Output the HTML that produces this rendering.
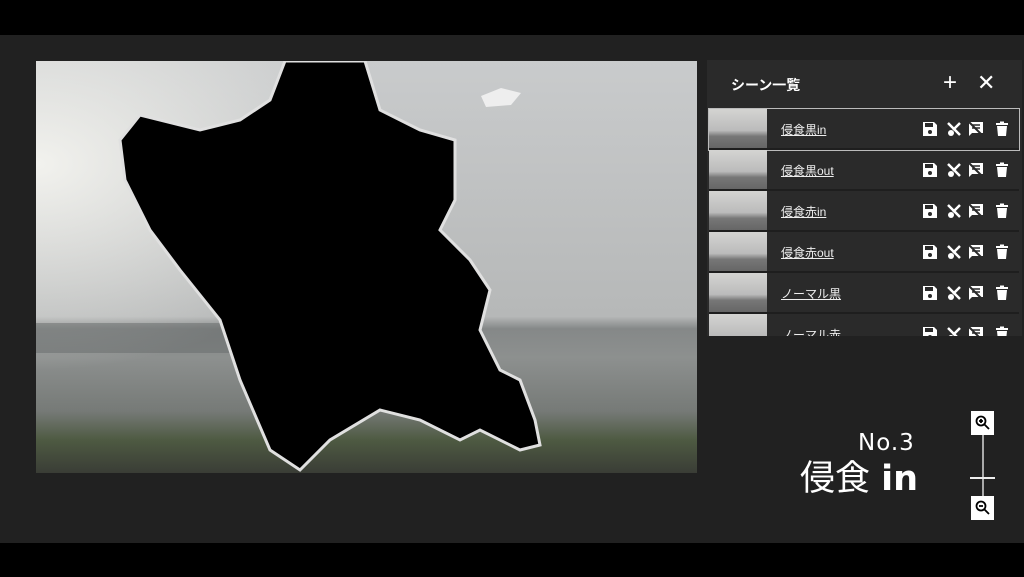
<!DOCTYPE html>
<html><head><meta charset="utf-8"><style>
body{margin:0;width:1024px;height:577px;background:#000;position:relative;overflow:hidden;font-family:"Liberation Sans","Noto Sans CJK JP",sans-serif}
#main{position:absolute;left:0;top:35px;width:1024px;height:508px;background:#212121}
#panel{position:absolute;left:707px;top:60px;width:315px;height:276px;background:#2a2a2a;overflow:hidden}
.hd{height:48px;position:relative;color:#fff;font-size:14px;font-weight:bold}
.row{position:absolute;left:2px;width:310px;height:39px;border-bottom:2px solid #1e1e1e}
.row .th{position:absolute;left:0;top:0;width:58px;height:39px;background:linear-gradient(#d4d4d2 0%,#bbb 55%,#777 70%,#666 100%)}
.row .t{position:absolute;left:72px;top:12px;color:#eee;font-size:12px;text-decoration:underline}
.ic{position:absolute;top:12px;width:16px;height:16px}
.zm{position:absolute;left:971px;width:23px;height:24px;background:#fff}
</style></head><body>
<div id="main"></div>
<svg style="position:absolute;left:36px;top:61px" width="661" height="412">
<defs><linearGradient id="sky" x1="0" y1="0" x2="0" y2="1"><stop offset="0" stop-color="#c9cbcc"/><stop offset="0.62" stop-color="#b6b8b8"/><stop offset="0.65" stop-color="#858888"/><stop offset="0.72" stop-color="#8d908f"/><stop offset="0.85" stop-color="#767a77"/><stop offset="0.92" stop-color="#4e5a42"/><stop offset="1" stop-color="#3a3d36"/></linearGradient>
<radialGradient id="sun" cx="0" cy="0.25" r="0.5"><stop offset="0" stop-color="#f2f2ee"/><stop offset="1" stop-color="#f2f2ee" stop-opacity="0"/></radialGradient></defs>
<rect width="661" height="412" fill="url(#sky)"/>
<rect width="661" height="412" fill="url(#sun)"/>
<rect y="262" width="200" height="30" fill="#666a6a" opacity="0.5"/>
<path d="M249,0 L329,0 L344,49 L384,69 L419,79 L419,139 L404,169 L434,199 L454,229 L444,269 L464,309 L484,319 L499,359 L504,384 L484,389 L444,369 L424,379 L384,359 L344,349 L294,379 L264,409 L234,389 L204,319 L184,259 L144,209 L114,169 L89,119 L84,79 L104,54 L164,69 L204,59 L234,39 Z" fill="#000" stroke="#e0e0e0" stroke-width="3"/>
<path d="M445,35 l20,-8 l20,5 l-10,12 l-25,2 z" fill="#eee"/>
</svg>
<div id="panel">
<div class="hd"><span style="position:absolute;left:24px;top:15px">シーン一覧</span>
<span style="position:absolute;left:236px;top:9px;font-size:24px;font-weight:normal">+</span>
<span style="position:absolute;left:270px;top:10px;font-size:22px;font-weight:normal">✕</span></div>
</div>
<script>
var names=["侵食黒in","侵食黒out","侵食赤in","侵食赤out","ノーマル黒","ノーマル赤"];
var p=document.getElementById('panel');
names.forEach(function(n,i){
var r=document.createElement('div');r.className='row';r.style.top=(49+i*41)+'px';
if(i==0){r.style.outline='1px solid #bbb';}
var ic='<svg class="ic" style="left:213px" viewBox="0 0 16 16"><path d="M1 1h11l3 3v11H1z" fill="#fff"/><rect x="3" y="2" width="8" height="4" fill="#2a2a2a"/><circle cx="8" cy="11" r="2" fill="#2a2a2a"/></svg>'+
'<svg class="ic" style="left:237px" viewBox="0 0 16 16"><path d="M2 2L14 14M14 2L7 9" stroke="#fff" stroke-width="2.5"/><circle cx="5" cy="12" r="3" fill="#fff"/></svg>'+
'<svg class="ic" style="left:259px" viewBox="0 0 16 16"><path d="M1 1h14v11H4l-3 3z" fill="#fff"/><path d="M4 4h8M4 7h8" stroke="#2a2a2a" stroke-width="1.5"/><path d="M1 1L15 15" stroke="#2a2a2a" stroke-width="2"/></svg>'+
'<svg class="ic" style="left:285px" viewBox="0 0 16 16"><rect x="2" y="2" width="12" height="2" fill="#fff"/><rect x="6" y="0.5" width="4" height="2" fill="#fff"/><path d="M3 5h10l-1 10H4z" fill="#fff"/></svg>';
r.innerHTML='<div class="th"></div><div class="t">'+n+'</div>'+ic;
p.appendChild(r);});
</script>
<div style="position:absolute;left:858px;top:430px;color:#fff;font-size:23px;font-family:'DejaVu Sans',sans-serif;letter-spacing:1px">No.3</div>
<div style="position:absolute;left:800px;top:456px;color:#fff;font-size:35px;font-family:'DejaVu Sans','Noto Sans CJK JP',sans-serif;line-height:46px">侵食 <b>in</b></div>
<div style="position:absolute;left:982px;top:432px;width:2px;height:65px;background:#aaa"></div>
<div style="position:absolute;left:970px;top:477px;width:25px;height:2px;background:#eee"></div>
<div class="zm" style="top:411px"><svg width="23" height="24" viewBox="0 0 23 24"><circle cx="10" cy="10" r="4.5" fill="none" stroke="#000" stroke-width="1.8"/><path d="M13 13l5 5M8 10h4M10 8v4" stroke="#000" stroke-width="1.8"/></svg></div>
<div class="zm" style="top:496px"><svg width="23" height="24" viewBox="0 0 23 24"><circle cx="10" cy="10" r="4.5" fill="none" stroke="#000" stroke-width="1.8"/><path d="M13 13l5 5M8 10h4" stroke="#000" stroke-width="1.8"/></svg></div>
</body></html>
